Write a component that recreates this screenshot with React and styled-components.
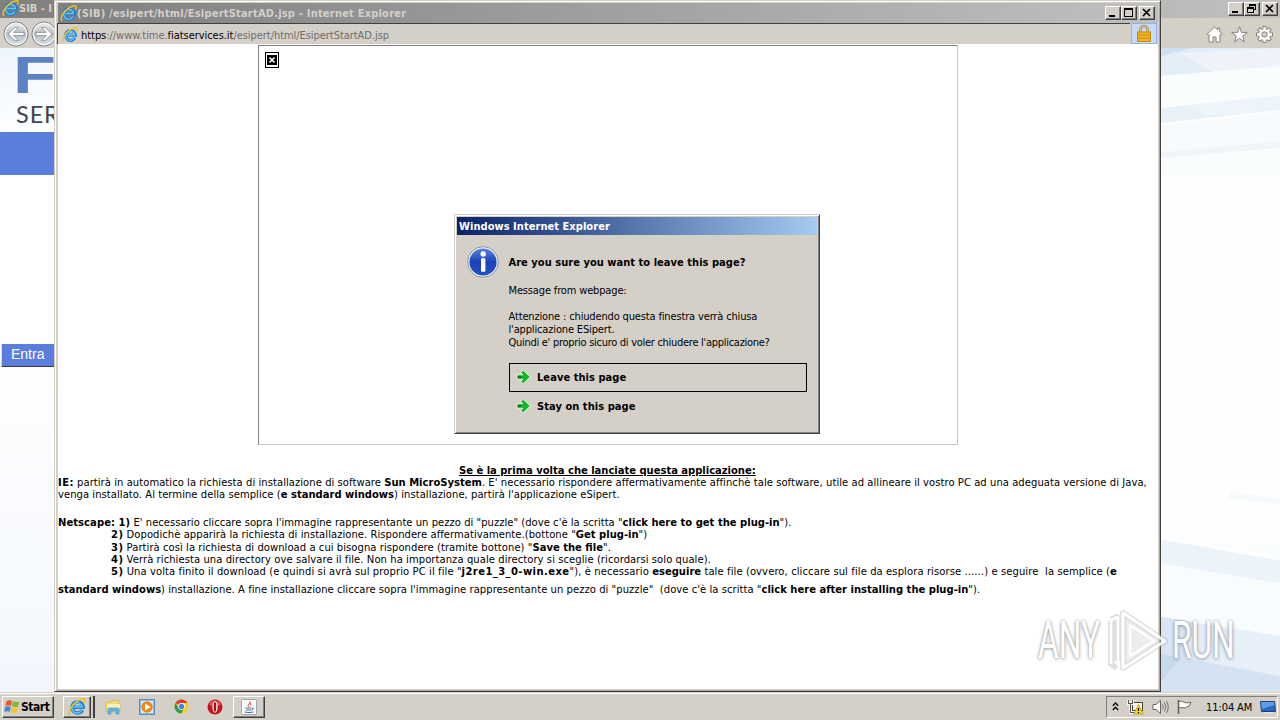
import styled, { createGlobalStyle, css } from "styled-components"

function IeLogo({ size }) {
    return (
        <svg width={size} height={size} viewBox="0 0 16 16">
            <path d="M12.8 10.800a4.900 4.900 0 1 1 .6-2.600H4.600" fill="none" stroke="#1d7fd0" strokeWidth="3.200" />
            <path d="M12.200 10.900a4.600 4.600 0 1 1 .5-2.900H5" fill="none" stroke="#6cc5f2" strokeWidth="1.300" />
            <path d="M2 14.600C-.6 13 3 6.600 7.400 3.400 11 .8 14.800-.2 15.200 1.600c.2.8-.2 1.800-.8 2.800" fill="none" stroke="#f0c020" strokeWidth="1.400" />
        </svg>
    )
}

function NavArrow({ flip }) {
    return (
        <svg width="26" height="26" viewBox="0 0 26 26">
            <defs>
                <linearGradient id="nav" x1="0" y1="0" x2="0" y2="1">
                    <stop offset="0" stopColor="#f2f2f2" />
                    <stop offset=".5" stopColor="#b9bcc0" />
                    <stop offset="1" stopColor="#d4e6f0" />
                </linearGradient>
            </defs>
            <circle cx="13" cy="13" r="12" fill="url(#nav)" stroke="#70747a" />
            <circle cx="13" cy="13" r="10.8" fill="none" stroke="#f4f6f8" strokeWidth="1.2" />
            <path
                transform={flip ? "matrix(-1 0 0 1 26 0)" : undefined}
                d="M5 13l7-6.6h3.4L10.6 11.4H21v3.2H10.6l4.8 5H12z"
                fill="#fff" stroke="#85898e" strokeWidth=".8"
            />
        </svg>
    )
}

function Caption({ kind }) {
    return (
        <CaptionButton $gap={kind === "close"}>
            <svg width="12" height="10" viewBox="0 0 12 10" shapeRendering="crispEdges">
                {kind === "min" && <rect x="2" y="7" width="6" height="2" />}
                {kind === "max" && <path d="M1 0h9v9H1zM2 2v6h7V2z" fillRule="evenodd" />}
                {kind === "restore" && <path d="M3 0h7v6H8v3H1V3h2zM4 2v1h4v2h1V2zM2 5v3h5V5z" fillRule="evenodd" />}
                {kind === "close" && (
                    <path d="M2 1l7 7M9 1L2 8" stroke="#000" strokeWidth="1.7" shapeRendering="auto" />
                )}
            </svg>
        </CaptionButton>
    )
}

function Arrow() {
    return (
        <svg width="15" height="14" viewBox="0 0 15 14">
            <path d="M1 4.800h5.800L4.600 2.200 7.400.3 14.300 7l-6.900 6.700L4.600 11.800l2.200-2.600H1z" fill="#10b828" stroke="#e9f5e6" strokeWidth="1" />
            <path d="M1.600 5.800h4v2.400h-4z" fill="#0a7d1a" />
        </svg>
    )
}

function Facets() {
    return (
        <svg width="119" height="644" viewBox="0 0 119 644" preserveAspectRatio="none">
            <defs>
                <linearGradient id="low" x1="0" y1="0" x2="0" y2="1">
                    <stop offset="0" stopColor="#fff" />
                    <stop offset="1" stopColor="#f1f8fc" />
                </linearGradient>
            </defs>
            <rect width="119" height="644" fill="#fefefe" />
            <path d="M0 0h119v18L0 28z" fill="#e3edf7" />
            <path d="M18 5L119 0v18l-66 6z" fill="#eef3fa" />
            <path d="M0 0h32L0 8z" fill="#cfdff1" />
            <path d="M0 28L119 18v31L0 60z" fill="#fafdfe" />
            <path d="M0 60L119 48v14L0 75z" fill="#e8f1f8" />
            <path d="M18 58L119 48v14l-68 6z" fill="#edf4fa" />
            <path d="M0 77L119 64v29L0 104z" fill="#f7fbfd" />
            <path d="M0 104L119 93v7L0 110z" fill="#f1f5fa" />
            <path d="M0 110L119 102v26H0z" fill="#f8fcfd" />
            <path d="M0 438L119 456v188H0z" fill="url(#low)" />
            <path d="M70 444l49 6v7l-52-7z" fill="#f6fafd" />
            <path d="M0 491l119 20v27L0 515z" fill="#edf3fb" />
            <path d="M0 515l119 20v54L0 570z" fill="#f8fcfe" />
            <path d="M0 490l119 21" stroke="#fff" strokeWidth="3" />
            <path d="M0 569l119 19v56H0z" fill="#e7eff9" />
            <path d="M0 569l32 5-8 41L0 634z" fill="#dae5f3" />
            <path d="M0 606l119 22v16H0z" fill="#d5e2f1" />
            <path d="M0 606l20 4L0 634z" fill="#c9d9ec" />
        </svg>
    )
}

function InfoIcon() {
    return (
        <svg width="32" height="32" viewBox="0 0 32 32">
            <defs>
                <linearGradient id="info" x1="0" y1="0" x2="0" y2="1">
                    <stop offset="0" stopColor="#5b82dc" />
                    <stop offset=".5" stopColor="#1a43b8" />
                    <stop offset="1" stopColor="#2450c4" />
                </linearGradient>
            </defs>
            <circle cx="16" cy="16" r="15.3" fill="#f2f5fa" stroke="#7d8798" strokeWidth=".9" />
            <circle cx="16" cy="16" r="13.6" fill="url(#info)" />
            <circle cx="16.2" cy="8" r="2.7" fill="#fff" />
            <rect x="14" y="12.2" width="4.4" height="13.6" rx=".8" fill="#fff" />
        </svg>
    )
}

function Background() {
    return (
        <MainWindow>
            <MainTitle>
                <IeLogo size={17} />
                <TitleText>SIB - I</TitleText>
                <Caption kind="min" />
                <Caption kind="restore" />
                <Caption kind="close" />
            </MainTitle>
            <NavBar>
                <NavArrow />
                <NavArrow flip />
                <Tools>
                    <svg width="17" height="17" viewBox="0 0 17 17">
                        <path d="M8.5 1L.8 8.2l1.2 1.2 1-.8V16h4v-5h3v5h4V8.6l1 .8 1.2-1.2L13.8 6V2h-2v2z" fill="#fff" stroke="#85827c" />
                    </svg>
                    <svg width="17" height="17" viewBox="0 0 17 17">
                        <path d="M8.5.8l2 5.6h5.8l-4.6 3.6 1.7 5.8-4.9-3.5-4.900 3.500L5.300 10 .7 6.400h5.800z" fill="#fff" stroke="#85827c" />
                    </svg>
                    <svg width="17" height="17" viewBox="0 0 17 17">
                        <g stroke="#85827c" strokeWidth="4">
                            <path d="M8.500 0v17M0 8.500h17M2.500 2.500l12 12M14.500 2.500l-12 12" />
                        </g>
                        <circle cx="8.500" cy="8.500" r="6.300" fill="#85827c" />
                        <g stroke="#fff" strokeWidth="2.300">
                            <path d="M8.500 1v15M1 8.500h15M3.200 3.200l10.600 10.600M13.800 3.200L3.200 13.800" />
                        </g>
                        <circle cx="8.500" cy="8.500" r="5.500" fill="#fff" />
                        <circle cx="8.500" cy="8.500" r="2.700" fill="#d4d0c8" stroke="#85827c" />
                    </svg>
                </Tools>
            </NavBar>
            <MainPage>
                <Portal>
                    <Brand>
                        <BrandName>F</BrandName>
                        <BrandSub>SER</BrandSub>
                    </Brand>
                    <BlueBand />
                    <Enter>Entra</Enter>
                </Portal>
                <Facets />
            </MainPage>
        </MainWindow>
    )
}

function Popup() {
    return (
        <PopupWindow>
            <PopupTitle>
                <IeLogo size={17} />
                <TitleText $spaced>(SIB) /esipert/html/EsipertStartAD.jsp - Internet Explorer</TitleText>
                <Caption kind="min" />
                <Caption kind="max" />
                <Caption kind="close" />
            </PopupTitle>
            <AddressRow>
                <Address>
                    <IeLogo size={16} />
                    <Url>
                        <b>https</b>://www.time.<b>fiatservices.it</b>/esipert/html/EsipertStartAD.jsp
                    </Url>
                </Address>
                <LockBox>
                    <svg width="14" height="17" viewBox="0 0 14 17">
                        <path d="M3.5 8V4.5a3.5 3.5 0 0 1 7 0V8" fill="none" stroke="#a77d3c" strokeWidth="2.4" />
                        <path d="M3.5 8V4.5a3.5 3.5 0 0 1 7 0V8" fill="none" stroke="#ecd9b0" strokeWidth=".9" />
                        <rect x=".5" y="7" width="13" height="9.5" fill="#f2b21c" stroke="#c8860c" />
                        <path d="M1 10h12M1 13h12" stroke="#cf8e10" />
                    </svg>
                </LockBox>
            </AddressRow>
            <PopupPage>
                <Applet>
                    <Broken>
                        <svg width="10" height="10" viewBox="0 0 10 10">
                            <rect width="10" height="10" />
                            <path d="M2.5 2.5l5 5M7.5 2.5l-5 5" stroke="#fff" strokeWidth="1.6" />
                        </svg>
                    </Broken>
                </Applet>
                <Heading>Se è la prima volta che lanciate questa applicazione:</Heading>
                <Line $spacing={0.055}>
                    <Wide>IE:</Wide> partirà in automatico la richiesta di installazione di software <b>Sun MicroSystem</b>. E' necessario rispondere affermativamente affinchè tale software, utile ad allineare il vostro PC ad una adeguata versione di Java,
                </Line>
                <Line $after={16}>
                    venga installato. Al termine della semplice (<b>e standard windows</b>) installazione, partirà l'applicazione eSipert.
                </Line>
                <Line $spacing={0.03}>
                    <Strong>Netscape: 1)</Strong> E' necessario cliccare sopra l'immagine rappresentante un pezzo di "puzzle" (dove c'è la scritta "<b>click here to get the plug-in</b>").
                </Line>
                <Line $indent $after={1}>
                    <Wide>2)</Wide> Dopodichè apparirà la richiesta di installazione. Rispondere affermativamente.(bottone "<b>Get plug-in</b>")
                </Line>
                <Line $indent $spacing={0.055}>
                    <Wide>3)</Wide> Partirà così la richiesta di download a cui bisogna rispondere (tramite bottone) "<b>Save the file</b>".
                </Line>
                <Line $indent $spacing={0.07}>
                    <Wide>4)</Wide> Verrà richiesta una directory ove salvare il file. Non ha importanza quale directory si sceglie (ricordarsi solo quale).
                </Line>
                <Line $indent $spacing={0.095} $after={6}>
                    <Wide>5)</Wide> Una volta finito il download (e quindi si avrà sul proprio PC il file "<Wide>j2re1_3_0-win.exe</Wide>"), è necessario <b>eseguire</b> tale file (ovvero, cliccare sul file da esplora risorse ......) e seguire&nbsp; la semplice (<b>e</b>
                </Line>
                <Line>
                    <b>standard windows</b>) installazione. A fine installazione cliccare sopra l'immagine rappresentante un pezzo di "puzzle"&nbsp; (dove c'è la scritta "<b>click here after installing the plug-in</b>").
                </Line>
            </PopupPage>
        </PopupWindow>
    )
}

function LeaveDialog() {
    return (
        <Dialog>
            <DialogTitle>Windows Internet Explorer</DialogTitle>
            <DialogBody>
                <InfoIcon />
                <DialogText>
                    <Question>Are you sure you want to leave this page?</Question>
                    <Message>Message from webpage:</Message>
                    <Message>
                        Attenzione : chiudendo questa finestra verrà chiusa<br />
                        l'applicazione ESipert.<br />
                        <Tight>Quindi e' proprio sicuro di voler chiudere l'applicazione?</Tight>
                    </Message>
                    <Choice $focused><Arrow />Leave this page</Choice>
                    <Choice><Arrow />Stay on this page</Choice>
                </DialogText>
            </DialogBody>
        </Dialog>
    )
}

function Taskbar() {
    return (
        <Bar>
            <StartButton>
                <svg width="17" height="15" viewBox="0 0 17 15">
                    <path d="M2.6 2.2Q5 .6 8 2L7 7Q4.400 5.600 1.400 7z" fill="#e8542a" />
                    <path d="M9 2.300q3 1.500 6.400.2L14 7.400Q11 8.600 8 7.200z" fill="#7fbb32" />
                    <path d="M1.200 8Q4 6.600 6.800 8L5.800 12.800Q3 11.600.2 12.800z" fill="#3f86dc" />
                    <path d="M7.800 8.200q3 1.600 6 .2L12.600 13.200q-3 1.400-5.800 0z" fill="#f7c524" />
                </svg>
                Start
            </StartButton>
            <TaskButton $raised $stacked><IeLogo size={18} /></TaskButton>
            <TaskButton>
                <svg width="17" height="16" viewBox="0 0 17 16">
                    <path d="M1 3h5l1-1.500h7V5h1v8H1z" fill="#efd77c" stroke="#d2b453" strokeWidth=".7" />
                    <path d="M2 5h13v4H2z" fill="#fbf0b4" />
                    <path d="M3 15v-4.500q0-1.500 1.500-1.500h8q1.500 0 1.500 1.500V15h-3v-3H6v3z" fill="#63b5e4" stroke="#3f93c8" strokeWidth=".6" />
                </svg>
            </TaskButton>
            <TaskButton>
                <svg width="16" height="16" viewBox="0 0 16 16">
                    <rect x=".5" y=".5" width="15" height="15" fill="#8dbde6" stroke="#4f8fc9" />
                    <rect x="2" y="2" width="12" height="12" fill="#dcebf7" />
                    <circle cx="8" cy="8" r="5.800" fill="#f08518" />
                    <path d="M6 4.500L11.800 8 6 11.500z" fill="#fff" />
                </svg>
            </TaskButton>
            <TaskButton>
                <svg width="15" height="15" viewBox="0 0 16 16">
                    <circle cx="8" cy="8" r="7.500" fill="#f9cf28" />
                    <path d="M8 8L1.500 4.250A7.500 7.500 0 0 1 14.500 4.250H8z" fill="#de3b2c" />
                    <path d="M1.500 4.250A7.500 7.500 0 0 0 7.500 15.500L11 9.800 8 8 4.900 9.400z" fill="#2f9e4c" />
                    <circle cx="8" cy="8" r="3.700" fill="#fff" />
                    <circle cx="8" cy="8" r="2.900" fill="#4384e6" />
                </svg>
            </TaskButton>
            <TaskButton>
                <svg width="16" height="16" viewBox="0 0 16 16">
                    <circle cx="8" cy="8" r="7.500" fill="#c4161c" />
                    <path d="M2 5.500a6.500 6.500 0 0 1 12 0Q8 9 2 5.500" fill="#e0545a" />
                    <ellipse cx="8" cy="8" rx="2.600" ry="5.800" fill="#fff" />
                    <ellipse cx="8" cy="8" rx="1.300" ry="4.900" fill="#a90f14" />
                </svg>
            </TaskButton>
            <TaskButton $raised>
                <svg width="16" height="16" viewBox="0 0 16 16">
                    <rect x=".5" y=".5" width="15" height="15" rx="1" fill="#fbfbfb" stroke="#9aa5b2" />
                    <path d="M8.500 2q1.500 1.500-.5 3t0 3M10 4q-1.500 1 0 2.500" fill="none" stroke="#e0562c" />
                    <path d="M4.500 9h6M5 11h5M3.500 13q4.500 1.200 9 0M11 9q2-.3 1 1.400l-1.500.6" fill="none" stroke="#4b6f9c" />
                </svg>
            </TaskButton>
            <Tray>
                <svg width="7" height="9" viewBox="0 0 7 9">
                    <path d="M.8 3.800L3.500 1l2.700 2.800M.8 8L3.500 5.200 6.200 8" fill="none" stroke="#000" strokeWidth="1.300" />
                </svg>
                <svg width="17" height="16" viewBox="0 0 17 16">
                    <rect x="5.500" y="3.500" width="10" height="8" fill="#f4f4f4" stroke="#444" />
                    <path d="M1.500 1v3.500h4V1M3.500 4.500v9h4" fill="none" stroke="#fff" strokeWidth="3" />
                    <path d="M1.500 1v3.500h4V1M3.500 4.500v9h4" fill="none" stroke="#555" strokeWidth="1.200" />
                    <path d="M11.500 5.500l4.800 9.500H6.700z" fill="#f7d51c" stroke="#b8960c" strokeWidth=".7" />
                    <path d="M11.500 9v3M11.500 13v1.200" stroke="#000" strokeWidth="1.200" />
                </svg>
                <svg width="17" height="16" viewBox="0 0 17 16">
                    <path d="M1 5.500h3L8.500 1.500v13L4 10.500H1z" fill="#fff" stroke="#666" />
                    <path d="M10.500 5.500q1.500 2.500 0 5M12.500 3.500q3 4.500 0 9M14.500 2q3.500 6 0 12" fill="none" stroke="#777" />
                </svg>
                <svg width="17" height="16" viewBox="0 0 17 16">
                    <path d="M2.500 2.500q3-1 5 .5t7.500.5q-1 4.500-5.500 5.200-3.500.3-7-.2z" fill="#fff" stroke="#666" />
                    <path d="M2.500 1v14" stroke="#666" strokeWidth="1.600" />
                </svg>
                <Clock>11:04 AM</Clock>
                <svg width="16" height="14" viewBox="0 0 16 14">
                    <path d="M.5 1.500h14l1 10H1.500z" fill="#2c68c0" stroke="#1c3f80" />
                    <path d="M1 2h13l.3 3L2 9z" fill="#5f9de6" />
                    <path d="M3 12.800h10" stroke="#dde6f0" strokeWidth="1.200" />
                </svg>
            </Tray>
        </Bar>
    )
}

function App() {
    return (
        <Screen>
            <GlobalStyle />
            <Background />
            <Popup />
            <LeaveDialog />
            <Taskbar />
            <Watermark>
                <Mark>ANY</Mark>
                <svg width="62" height="66" viewBox="0 0 62 66">
                    <g fill="none" strokeLinejoin="round">
                        <path d="M16 5L58 33 16 60zM4 12v44l6 4M4 12l6-3v44" stroke="#a4a6a8" strokeOpacity=".4" strokeWidth="6" />
                        <path d="M16 5L58 33 16 60z" fill="#d0d0d0" fillOpacity=".45" stroke="#fff" strokeWidth="3" />
                        <path d="M4 56V12l7-3v49M23 17l24 16-24 15z" stroke="#fff" strokeWidth="2.500" />
                    </g>
                </svg>
                <Mark>RUN</Mark>
            </Watermark>
        </Screen>
    )
}

const GlobalStyle = createGlobalStyle`
    body{
        margin: 0;
        overflow: hidden;
    }
    svg{
        display: block;
        flex: none;
    }
`;

const tahoma = css`
    font-family: "DejaVu Sans Condensed", "DejaVu Sans", sans-serif;
    font-size: 11px;
`;

const raised = css`
    border: 1px solid;
    border-color: #fff #404040 #404040 #fff;
    box-shadow: inset -1px -1px 0 #808080;
`;

const Screen = styled.div`
    position: relative;
    width: 1280px;
    height: 720px;
    overflow: hidden;
    display: flex;
    flex-direction: column;
    background: #d4d0c8;
    color: #000;
    ${tahoma}
`;

const MainWindow = styled.div`
    height: 692px;
    display: flex;
    flex-direction: column;
`;

const MainTitle = styled.div`
    height: 18px;
    box-sizing: border-box;
    padding: 0 2px 1px 2px;
    display: flex;
    align-items: center;
    background: linear-gradient(90deg, #808080, #c0c0c0);
`;

const TitleText = styled.div`
    flex: 1;
    color: #d4d0c8;
    font-weight: 700;
    white-space: nowrap;
    letter-spacing: ${(props) => (props.$spaced ? "0.21px" : "0")};
`;

const CaptionButton = styled.div`
    width: 16px;
    height: 14px;
    box-sizing: border-box;
    margin-left: ${(props) => (props.$gap ? "2px" : "0")};
    padding: 1px;
    background: #d4d0c8;
    ${raised}
`;

const NavBar = styled.div`
    height: 30px;
    box-sizing: border-box;
    padding: 2px 7px 0 3px;
    display: flex;
    align-items: center;
    gap: 2px;
`;

const Tools = styled.div`
    margin-left: auto;
    display: flex;
    gap: 8px;
`;

const MainPage = styled.div`
    flex: 1;
    display: flex;
    justify-content: space-between;
    background: #fff;
`;

const Portal = styled.div`
    width: 54px;
    background: linear-gradient(#fff 45%, #f3f7fd);
`;

const Brand = styled.div`
    height: 84px;
    background: linear-gradient(160deg, #eef5fb, #f9fcfe 60%, #fff);
`;

const BrandName = styled.div`
    width: 32px;
    height: 54px;
    padding-left: 13px;
    color: #5c82c4;
    font: 700 51px/55px "Liberation Sans", sans-serif;
    transform: scaleX(1.38);
    transform-origin: 13px 0;
`;

const BrandSub = styled.div`
    padding-left: 16px;
    color: #414550;
    font: 400 23.5px/25px Lato, sans-serif;
    letter-spacing: 0.9px;
`;

const BlueBand = styled.div`
    height: 43px;
    margin-bottom: 169px;
    background: #5a7edc;
`;

const Enter = styled.div`
    height: 23px;
    box-sizing: border-box;
    margin-left: 1px;
    padding-left: 9px;
    border-left: 1px solid #d8dce8;
    border-bottom: 1px solid #3c3c3c;
    background: #5a7edc;
    color: #fff;
    font: 14px/21px "Liberation Sans", sans-serif;
`;

const PopupWindow = styled.div`
    position: absolute;
    left: 54px;
    top: 0;
    width: 1107px;
    height: 692px;
    box-sizing: border-box;
    padding: 2px 2px 1px 2px;
    display: flex;
    flex-direction: column;
    background: #d4d0c8;
    border: 1px solid;
    border-color: #d4d0c8 #404040 #404040 #d4d0c8;
    box-shadow: inset 1px 1px 0 #fff, inset -1px -1px 0 #a8a8a8;
`;

const PopupTitle = styled.div`
    height: 20px;
    box-sizing: border-box;
    margin-left: 1px;
    padding: 0 3px 0 2px;
    display: flex;
    align-items: center;
    background: linear-gradient(90deg, #808080, #c0c0c0);
`;

const AddressRow = styled.div`
    height: 21px;
    display: flex;
    gap: 1px;
`;

const Address = styled.div`
    flex: 1;
    box-sizing: border-box;
    padding: 1px 0 0 4px;
    border-top: 1px solid #404040;
    border-left: 1px solid #404040;
    display: flex;
    align-items: center;
    gap: 3px;
`;

const Url = styled.div`
    padding-top: 2px;
    color: #6d6d6d;
    letter-spacing: -0.05px;
    b{
        color: #000;
        font-weight: 400;
    }
`;

const LockBox = styled.div`
    width: 26px;
    box-sizing: border-box;
    margin-right: 1px;
    padding-bottom: 1px;
    border: 1px solid #90b4e4;
    background: #c6dcf6;
    display: flex;
    align-items: center;
    justify-content: center;
`;

const PopupPage = styled.div`
    flex: 1;
    margin: 0 0 1px 1px;
    padding-top: 1px;
    background: #fff;
    font: 10px/12px "DejaVu Sans", sans-serif;
    white-space: nowrap;
`;

const Applet = styled.div`
    width: 700px;
    height: 400px;
    box-sizing: border-box;
    margin: 0 0 20px 200px;
    padding: 6px;
    border: 1px solid;
    border-color: #808080 #c8c8c8 #c8c8c8 #808080;
`;

const Broken = styled.div`
    width: 14px;
    height: 16px;
    box-sizing: border-box;
    border: 1px solid #000;
    padding: 2px 1px;
`;

const Heading = styled.div`
    padding-left: 401px;
    font-weight: 700;
    letter-spacing: -0.02px;
    text-decoration: underline;
`;

const Line = styled.div`
    height: 12px;
    padding-left: ${(props) => (props.$indent ? "53px" : "0")};
    margin-bottom: ${(props) => props.$after || 0}px;
    letter-spacing: ${(props) => props.$spacing || 0.05}px;
    b{
        letter-spacing: 0;
    }
`;

const Strong = styled.strong`
    letter-spacing: 0.06px;
`;

const Wide = styled.strong`
    letter-spacing: 0.42px;
`;

const Dialog = styled.div`
    position: absolute;
    left: 454px;
    top: 214px;
    width: 366px;
    height: 220px;
    box-sizing: border-box;
    padding: 2px;
    background: #d4d0c8;
    border: 1px solid;
    border-color: #d4d0c8 #404040 #404040 #d4d0c8;
    box-shadow: inset 1px 1px 0 #fff, inset -1px -1px 0 #808080;
`;

const DialogTitle = styled.div`
    height: 18px;
    padding-left: 2px;
    background: linear-gradient(90deg, #0a246a, #a6caf0);
    color: #fff;
    font-weight: 700;
    line-height: 19px;
    letter-spacing: 0.05px;
`;

const DialogBody = styled.div`
    padding: 11px 10px 0 10px;
    display: flex;
    gap: 9.5px;
`;

const DialogText = styled.div`
    flex: 1;
    padding-top: 10px;
`;

const Question = styled.div`
    margin-bottom: 15px;
    font-weight: 700;
    line-height: 13px;
    letter-spacing: 0.04px;
`;

const Message = styled.div`
    margin-bottom: 13px;
    line-height: 13px;
    letter-spacing: -0.15px;
    white-space: nowrap;
`;

const Tight = styled.span`
    letter-spacing: -0.28px;
`;

const Choice = styled.div`
    position: relative;
    top: 1px;
    width: 298px;
    height: 29px;
    box-sizing: border-box;
    padding: 0 0 1px 6px;
    border: 1px solid ${(props) => (props.$focused ? "#000" : "transparent")};
    display: flex;
    align-items: center;
    gap: 6.5px;
    font-weight: 700;
    letter-spacing: 0.06px;
`;

const Bar = styled.div`
    height: 28px;
    box-sizing: border-box;
    padding: 3px 2px 2px 2px;
    display: flex;
    align-items: center;
    background: #d4d0c8;
    box-shadow: inset 0 1px 0 #d4d0c8, inset 0 2px 0 #fff;
`;

const StartButton = styled.div`
    width: 52px;
    height: 22px;
    box-sizing: border-box;
    margin-right: 9px;
    padding-left: 1px;
    display: flex;
    align-items: center;
    font-weight: 700;
    font-size: 12px;
    letter-spacing: -0.45px;
    ${raised}
`;

const TaskButton = styled.div`
    width: ${(props) => (props.$stacked ? "28px" : "32px")};
    height: 22px;
    box-sizing: border-box;
    margin-right: ${(props) => (props.$stacked ? "6px" : "2px")};
    display: flex;
    align-items: center;
    justify-content: center;
    ${(props) => props.$raised && raised}
    ${(props) => props.$stacked && css`
        box-shadow: inset -1px -1px 0 #808080, 2px 0 0 #d4d0c8, 4px 0 0 #404040;
    `}
`;

const Tray = styled.div`
    width: 172px;
    height: 22px;
    box-sizing: border-box;
    margin-left: auto;
    padding: 0 1px 0 5px;
    display: flex;
    align-items: center;
    justify-content: space-between;
    border: 1px solid;
    border-color: #808080 #fff #fff #808080;
`;

const Clock = styled.div`
    padding: 1px 0 0 5px;
    letter-spacing: -0.1px;
`;

const Watermark = styled.div`
    position: absolute;
    left: 1038px;
    top: 607px;
    display: flex;
    align-items: center;
    gap: 3px;
    opacity: 0.85;
`;

const Mark = styled.div`
    width: 66px;
    color: #fff;
    font: 400 52px/68px Roboto, sans-serif;
    text-shadow: 0 0 3px rgba(110, 115, 120, 0.8), 0 1px 5px rgba(110, 115, 120, 0.6);
    transform: scaleX(0.61);
    transform-origin: 0 0;
`;

export default App
